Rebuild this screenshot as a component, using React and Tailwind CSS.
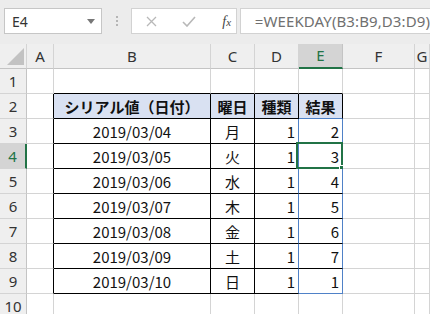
import React from "react";

const COLS = ["A", "B", "C", "D", "E", "F", "G"];

const DATA = [
  ["2019/03/04", "月", 1, 2],
  ["2019/03/05", "火", 1, 3],
  ["2019/03/06", "水", 1, 4],
  ["2019/03/07", "木", 1, 5],
  ["2019/03/08", "金", 1, 6],
  ["2019/03/09", "土", 1, 7],
  ["2019/03/10", "日", 1, 1],
];

const HEAD = ["シリアル値（日付）", "曜日", "種類", "結果"];

const inTableCol = (c) => c === "B" || c === "C" || c === "D" || c === "E";

function rightColor(r, c) {
  if ((c === "D" || c === "E") && r >= 3 && r <= 9) return "border-r-[#4f81c7]";
  if (inTableCol(c) && r >= 2 && r <= 9) return "border-r-black";
  if (c === "A" && r >= 2 && r <= 9) return "border-r-black";
  return "border-r-[#d4d4d4]";
}

function bottomColor(r, c) {
  if (c === "E" && (r === 2 || r === 9)) return "border-b-[#4f81c7]";
  if (inTableCol(c) && r >= 1 && r <= 9) return "border-b-black";
  return "border-b-[#d4d4d4]";
}

function cellContent(r, c) {
  if (r === 2 && inTableCol(c)) {
    return { text: HEAD[COLS.indexOf(c) - 1], align: "justify-center", head: true };
  }
  if (r >= 3 && r <= 9) {
    const row = DATA[r - 3];
    if (c === "B") return { text: row[0], align: "justify-center" };
    if (c === "C") return { text: row[1], align: "justify-center" };
    if (c === "D") return { text: row[2], align: "justify-end" };
    if (c === "E") return { text: row[3], align: "justify-end" };
  }
  return null;
}

const Toolbar = () => (
  <div className="flex h-[44px] items-start bg-[#ececec]">
    {/* name box */}
    <div className="ml-[4px] mt-[8px] flex h-[26px] w-[102px] items-center justify-between border border-[#c6c6c6] bg-white pl-[7px] pr-[6px]">
      <span className="text-[14px] text-[#333]">E4</span>
      <svg width="8" height="5" viewBox="0 0 8 5">
        <path d="M0 0 L8 0 L4 5 Z" fill="#777" />
      </svg>
    </div>
    <div className="ml-[14px] mt-[16px] flex w-[3px] flex-col gap-[2px]">
      <span className="h-[2px] w-[2px] bg-[#b5b5b5]" />
      <span className="h-[2px] w-[2px] bg-[#b5b5b5]" />
      <span className="h-[2px] w-[2px] bg-[#b5b5b5]" />
    </div>
    {/* cancel / enter / fx */}
    <div className="ml-[12px] mt-[8px] flex h-[26px] w-[110px] items-center border border-[#d2d2d2] bg-white">
      <svg width="11" height="11" viewBox="0 0 11 11" className="ml-[14px]">
        <path d="M1 1 L10 10 M10 1 L1 10" stroke="#b8b8b8" strokeWidth="1.3" />
      </svg>
      <svg width="14" height="11" viewBox="0 0 14 11" className="ml-[25px]">
        <path d="M1 6 L5 10 L13 1" stroke="#b8b8b8" strokeWidth="1.6" fill="none" />
      </svg>
      <span className="ml-[26px] font-['Liberation_Serif',serif] text-[14px] italic text-[#444]">
        f<span className="text-[11px]">x</span>
      </span>
    </div>
    {/* formula */}
    <div className="ml-[3px] mt-[8px] flex h-[26px] flex-1 items-center border border-r-0 border-[#d2d2d2] bg-white pl-[14px]">
      <span className="text-[15px] tracking-[0.1px] text-[#707070]">=WEEKDAY(B3:B9,D3:D9)</span>
    </div>
  </div>
);

const ColHeader = () => (
  <>
    <div className="relative h-[25px] border-r border-b border-r-[#d4d4d4] border-b-[#c4c4c4] bg-[#efefef]">
      <svg width="26" height="24" viewBox="0 0 26 24" className="absolute left-0 top-0">
        <path d="M24 4 L24 21 L7 21 Z" fill="#c2c2c2" />
      </svg>
    </div>
    {COLS.map((c) =>
      c === "E" ? (
        <div
          key={c}
          className="flex h-[25px] items-center justify-center border-r border-b-2 border-r-[#c4c4c4] border-b-[#217346] bg-[#d4d4d4] text-[15px] text-[#217346]"
        >
          {c}
        </div>
      ) : (
        <div
          key={c}
          className="flex h-[25px] items-center justify-center border-r border-b border-r-[#d4d4d4] border-b-[#c4c4c4] bg-[#efefef] text-[15px] text-[#333]"
        >
          {c}
        </div>
      )
    )}
  </>
);

const SheetRow = ({ r }) => (
  <>
    {r === 4 ? (
      <div className="flex h-[25px] items-center justify-center border-r-2 border-b border-r-[#217346] border-b-[#d4d4d4] bg-[#d4d4d4] text-[15px] text-[#217346]">
        {r}
      </div>
    ) : (
      <div className="flex h-[25px] items-center justify-center border-r border-b border-r-[#c4c4c4] border-b-[#d4d4d4] bg-[#efefef] text-[15px] text-[#333]">
        {r}
      </div>
    )}
    {COLS.map((c) => {
      const cell = cellContent(r, c);
      const bg = cell && cell.head ? "bg-[#d9e1f2]" : "bg-white";
      return (
        <div
          key={c}
          className={`relative flex h-[25px] items-center border-r border-b px-[3px] font-['Noto_Sans_CJK_JP',sans-serif] text-[15px] text-[#111] ${rightColor(r, c)} ${bottomColor(r, c)} ${bg} ${cell ? cell.align : ""} ${cell && cell.head ? "font-bold text-[14px]" : ""}`}
        >
          {cell && <span className="leading-none">{cell.text}</span>}
          {r === 4 && c === "E" && (
            <>
              <div className="absolute -left-[3px] -top-[2px] -right-[1px] -bottom-[1px] border-2 border-[#217346]" />
              <div className="absolute -bottom-[3px] -right-[3px] h-[6px] w-[6px] border border-white bg-[#217346]" />
            </>
          )}
        </div>
      );
    })}
  </>
);

export default function App() {
  return (
    <div className="h-[314px] w-[430px] overflow-hidden bg-white font-['Noto_Sans',sans-serif]">
      <Toolbar />
      <div className="grid grid-cols-[27px_27px_157px_44px_44px_44px_72px_1fr]">
        <ColHeader />
        {[1, 2, 3, 4, 5, 6, 7, 8, 9, 10].map((r) => (
          <SheetRow key={r} r={r} />
        ))}
      </div>
    </div>
  );
}
